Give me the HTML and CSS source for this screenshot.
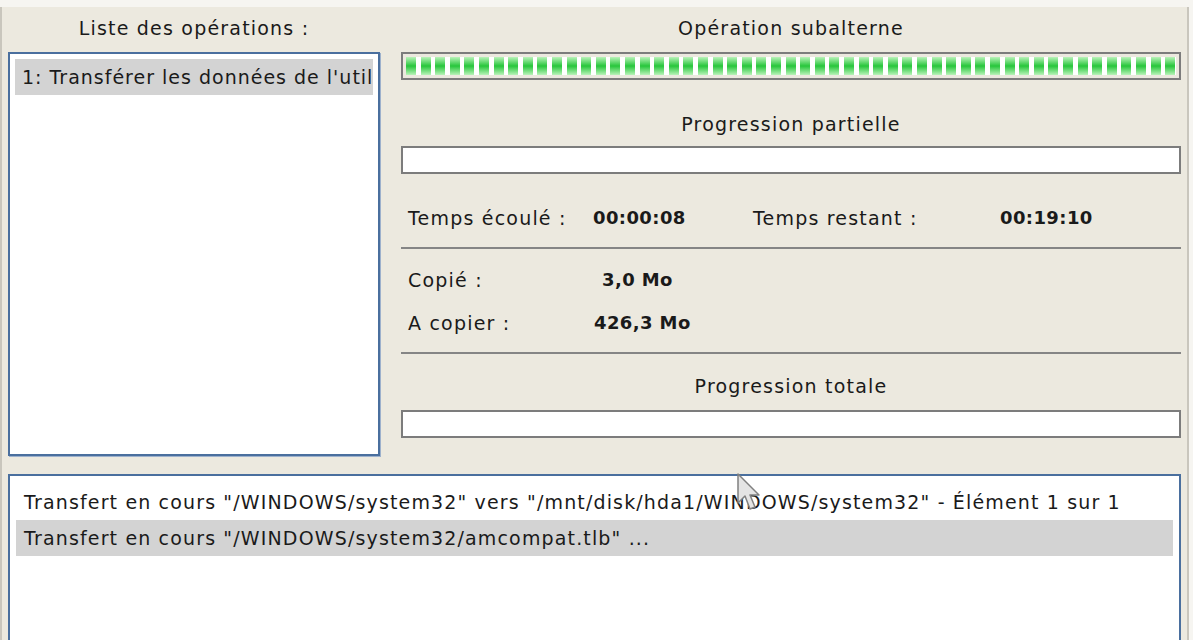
FILE: index.html
```html
<!doctype html>
<html lang="fr">
<head>
    <meta charset="UTF-8">
    <title>Opérations</title>
    <link rel="stylesheet" href="styles.css">
</head>
<body>
<div class="window">
    <div class="top">
        <div class="ops">
            <div class="caption">Liste des opérations :</div>
            <div class="listbox">
                <div class="item selected">1: Transférer les données de l'util</div>
            </div>
        </div>
        <div class="progress">
            <div class="caption">Opération subalterne</div>
            <div class="bar bar-busy"></div>
            <div class="caption sub">Progression partielle</div>
            <div class="bar"></div>
            <div class="row times">
                <span>Temps écoulé :</span>
                <b>00:00:08</b>
                <span>Temps restant :</span>
                <b>00:19:10</b>
            </div>
            <hr>
            <div class="sizes">
                <div class="row">
                    <span>Copié :</span>
                    <b class="short">3,0 Mo</b>
                </div>
                <div class="row">
                    <span>A copier :</span>
                    <b>426,3 Mo</b>
                </div>
            </div>
            <hr>
            <div class="caption sub total">Progression totale</div>
            <div class="bar"></div>
        </div>
    </div>
    <div class="log">
        <div class="item">Transfert en cours "/WINDOWS/system32" vers "/mnt/disk/hda1/WINDOWS/system32" - Élément 1 sur 1</div>
        <div class="item selected">Transfert en cours "/WINDOWS/system32/amcompat.tlb" ...</div>
    </div>
    <svg class="cursor" width="24" height="40" viewBox="0 0 24 40">
        <path d="M1 1 L1 30 L8 23 L13 36 L18 34 L13 22 L22 22 Z" fill="#e4e4e4" stroke="#808080" stroke-width="1.5" stroke-linejoin="round"/>
    </svg>
</div>
</body>
</html>
```

FILE: styles.css
```css
body{
    margin: 0;
    background: #f6f5f1;
    font-family: "DejaVu Sans", Verdana, sans-serif;
    font-size: 19px;
    letter-spacing: 1.2px;
    color: #1a1a1a;
}
.window{
    position: relative;
    margin-top: 7px;
    height: 633px;
    background: #ece9df;
    border-left: 2px solid #c9c6bd;
    border-right: 2px solid #c9c6bd;
    width: 1189px;
    box-sizing: border-box;
    overflow: hidden;
}
.top{
    display: grid;
    grid-template-columns: 372px 780px;
    column-gap: 21px;
    padding-left: 6px;
}
.caption{
    height: 45px;
    line-height: 43px;
    text-align: center;
    white-space: nowrap;
}
.listbox{
    height: 404px;
    box-sizing: border-box;
    background: #fff;
    border: 2px solid #4a6f9e;
    box-shadow: 1px 1px 0 #9db1cc;
    padding: 5px;
}
.listbox .item{
    letter-spacing: 1px;
}
.item{
    height: 36px;
    line-height: 36px;
    padding-left: 7px;
    white-space: nowrap;
    overflow: hidden;
}
.selected{
    background: #d3d3d3;
}
.bar{
    height: 28px;
    box-sizing: border-box;
    border: 2px solid #7c7c7c;
    background: #fff;
}
.bar-busy{
    padding: 3px;
    background-color: #fff;
    background-image:
        repeating-linear-gradient(to right, transparent 0 10px, #fff 10px 14.6px),
        linear-gradient(to bottom, #b9f3b9, #27c63b 50%, #b9f3b9);
    background-origin: content-box;
    background-clip: content-box;
}
.sub{
    height: 66px;
    padding-top: 22px;
    line-height: 44px;
    box-sizing: border-box;
}
.total{
    height: 56px;
    padding-top: 10px;
}
.row{
    display: grid;
    padding-left: 7px;
    align-items: center;
}
.row b{
    font-weight: bold;
    font-size: 18px;
    letter-spacing: 0.4px;
}
.times{
    grid-template-columns: 185px 160px 247px auto;
    height: 73px;
    padding-top: 14px;
    box-sizing: border-box;
}
.sizes{
    padding: 9px 0 8px;
}
.sizes .row{
    grid-template-columns: 186px auto;
    height: 43px;
}
.short{
    padding-left: 8px;
}
hr{
    margin: 0;
    border: 0;
    border-top: 2px solid #858585;
}
.log{
    margin: 18px 0 0 6px;
    width: 1173px;
    height: 200px;
    box-sizing: border-box;
    background: #fff;
    border: 2px solid #4a6f9e;
    padding: 8px 6px;
}
.log .item{
    padding-left: 8px;
    letter-spacing: 1.15px;
}
.cursor{
    position: absolute;
    left: 735px;
    top: 466px;
}
```
